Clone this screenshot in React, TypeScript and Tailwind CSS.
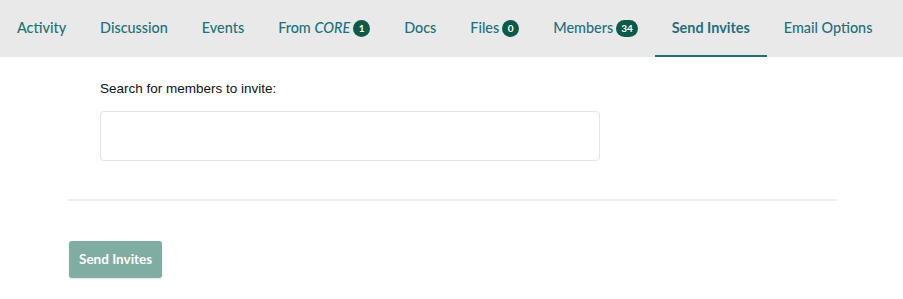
const tabs: { label: string; italic?: string; badge?: string; active?: boolean }[] = [
  { label: 'Activity' },
  { label: 'Discussion' },
  { label: 'Events' },
  { label: 'From ', italic: 'CORE', badge: '1' },
  { label: 'Docs' },
  { label: 'Files', badge: '0' },
  { label: 'Members', badge: '34' },
  { label: 'Send Invites', active: true },
  { label: 'Email Options' },
];

export default function App() {
  return (
    <div className="min-h-[299px] bg-white font-['Lato',sans-serif]">
      {/* Group tabs */}
      <nav className="flex h-[57px] items-stretch bg-[#e9e9e9]">
        {tabs.map(tab => (
          <a
            key={tab.label + (tab.italic ?? '')}
            href="#"
            className={`flex items-center gap-[3px] border-b-2 px-[17px] pt-[1px] text-[14.4px] text-[#23707a] ${
              tab.active ? 'border-[#1d6f78] font-bold' : 'border-transparent font-medium'
            }`}
          >
            <span>
              {tab.label}
              {tab.italic && <i>{tab.italic}</i>}
            </span>
            {tab.badge && (
              <span className="flex h-[17px] min-w-[17px] items-center justify-center rounded-full bg-[#0b5b48] px-[5px] text-[10px] font-bold leading-none text-white">
                {tab.badge}
              </span>
            )}
          </a>
        ))}
      </nav>

      {/* Invite form */}
      <div className="pl-[68px] pr-[66px]">
        <div className="px-8 pt-[22px] pb-[38px]">
          <label className="block font-['Liberation_Sans',sans-serif] text-[13.5px] leading-[19px] text-[#111]">
            Search for members to invite:
          </label>
          <input
            type="text"
            className="mt-[13px] block h-[50px] w-[500px] rounded-[4px] border border-[#e4e4e4] bg-white"
          />
        </div>
        <div className="h-[2px] bg-[#efefef]" />
        <button className="mt-[40px] ml-px h-[37px] rounded-[3px] bg-[#80ada2] px-[10px] text-[13.5px] font-bold text-white shadow-[0_1px_2px_rgba(0,0,0,0.12)]">
          Send Invites
        </button>
      </div>
    </div>
  );
}
